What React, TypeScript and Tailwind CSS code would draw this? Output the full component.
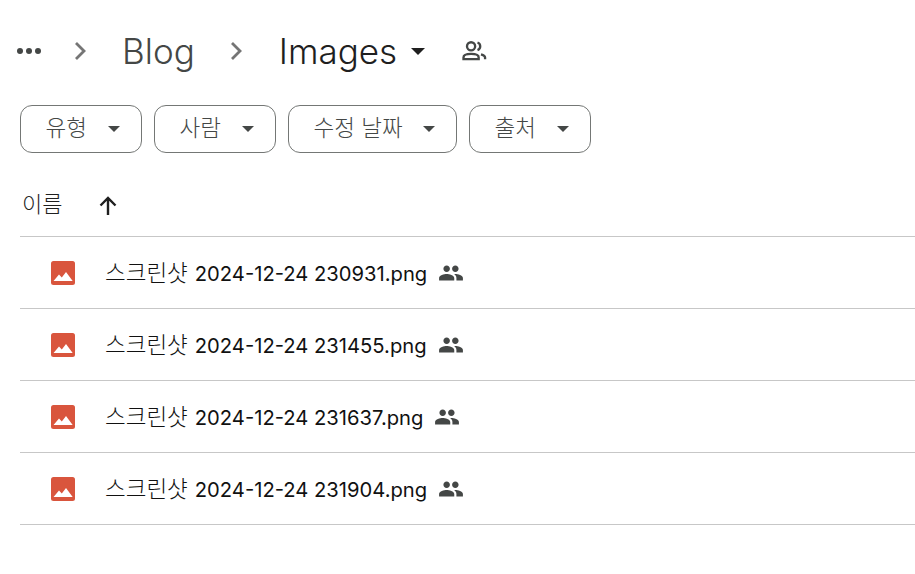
import React from 'react';

const files = ['230931', '231455', '231637', '231904'];
const filters = [
  { label: '유형', w: 'w-[122px]' },
  { label: '사람', w: 'w-[122px]' },
  { label: '수정 날짜', w: 'w-[169px]' },
  { label: '출처', w: 'w-[122px]' },
];

const Chevron = () => (
  <svg width="12" height="20" viewBox="0 0 12 20" fill="none" stroke="#757575" strokeWidth="2.800">
    <path d="M2 2l8 8-8 8" />
  </svg>
);

const Caret = ({ className, size }: { className: string; size: number }) => (
  <svg className={className} width={size} height={size / 2} viewBox="0 0 14 7" fill="currentColor">
    <path d="M0 0h14L7 7z" />
  </svg>
);

const ImageIcon = () => (
  <svg width="24" height="24" viewBox="0 0 24 24">
    <rect width="24" height="24" rx="2.500" fill="#d9553d" />
    <path d="M2.500 20 8 13.500l2.800 3.100L15 11l6.700 9z" fill="#fff" />
  </svg>
);

const SharedIcon = () => (
  <svg width="26" height="26" viewBox="0 0 24 24" fill="#444746">
    <path d="M16 11c1.700 0 3-1.300 3-3s-1.300-3-3-3-3 1.300-3 3 1.300 3 3 3zm-8 0c1.700 0 3-1.300 3-3S9.700 5 8 5 5 6.300 5 8s1.300 3 3 3zm0 2c-2.300 0-7 1.200-7 3.500V19h14v-2.500C15 14.200 10.300 13 8 13zm8 0c-.3 0-.6 0-1 .100 1.200.800 2 2 2 3.400V19h6v-2.500c0-2.300-4.700-3.500-7-3.500z" />
  </svg>
);

export default function App() {
  return (
    <div className="min-h-[574px] bg-white pl-[20px] pt-[23px] font-['Inter','Noto_Sans_CJK_KR',sans-serif] text-[#1f1f1f]">
      <div className="flex h-[56px] items-center">
        <div className="-ml-[3px] flex w-[24px] justify-between">
          <span className="size-[6px] rounded-full bg-[#444746]" />
          <span className="size-[6px] rounded-full bg-[#444746]" />
          <span className="size-[6px] rounded-full bg-[#444746]" />
        </div>
        <div className="ml-[33px]"><Chevron /></div>
        <span className="ml-[36px] text-[35px] font-light leading-none text-[#444746]">Blog</span>
        <div className="ml-[35px]"><Chevron /></div>
        <span className="ml-[37px] text-[35px] font-light leading-none">Images</span>
        <Caret className="ml-[14px] text-[#1f1f1f]" size={14} />
        <svg className="ml-[35px]" width="28" height="28" viewBox="0 0 24 24" fill="none" stroke="#444746" strokeWidth="2">
          <circle cx="9.500" cy="8" r="3.500" />
          <path d="M3 19v-1.500C3 15.500 6 14.500 9.500 14.500s6.500 1 6.500 3V19z" />
          <path d="M15 4.700a3.500 3.500 0 0 1 0 6.600M18 14.800c2 .6 3.500 1.500 3.500 2.700V19" />
        </svg>
      </div>

      <div className="mt-[26px] flex gap-[12px]">
        {filters.map((f) => (
          <button
            key={f.label}
            className={`flex h-[48px] ${f.w} items-center justify-between rounded-[12px] border border-[#747775] pl-[24.500px] pr-[21px] text-[22.500px] text-[#444746]`}
          >
            <span className="-mt-[3px] font-light">{f.label}</span>
            <Caret className="text-[#444746]" size={12} />
          </button>
        ))}
      </div>

      <div className="mt-[26px] flex h-[58px] items-center border-b border-[#c7c7c7] pb-[6px] pl-[2px]">
        <span className="text-[22px] font-light text-[#1f1f1f]">이름</span>
        <svg className="ml-[32px] mt-[2px]" width="28" height="28" viewBox="0 0 28 28" fill="none" stroke="#1f1f1f" strokeWidth="2.400">
          <path d="M14 23V6M6.500 13.500 14 6l7.500 7.500" />
        </svg>
      </div>

      {files.map((f) => (
        <div key={f} className="flex h-[72px] items-center border-b border-[#c7c7c7] pl-[31px]">
          <ImageIcon />
          <span className="ml-[30px] flex items-baseline text-[20.200px] text-[#111]">
            <span className="mr-[7px] text-[22.500px] font-light">스크린샷</span>
            2024-12-24 {f}.png
          </span>
          <span className="ml-[11px]"><SharedIcon /></span>
        </div>
      ))}
    </div>
  );
}
